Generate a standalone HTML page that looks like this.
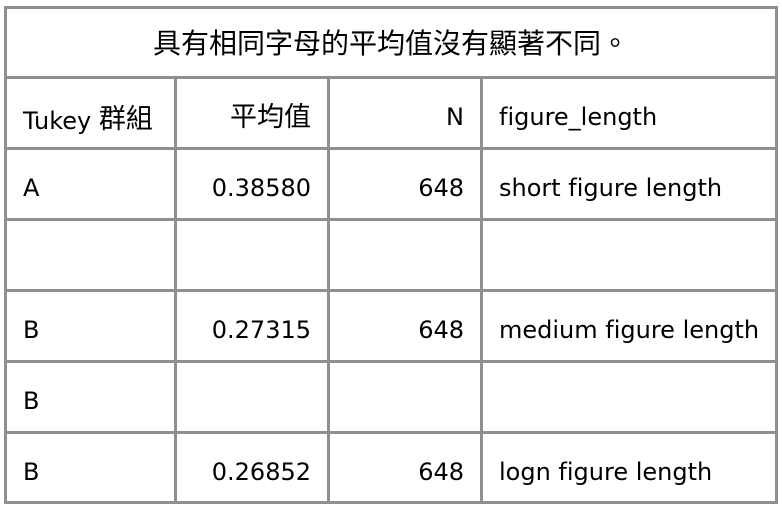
<!DOCTYPE html>
<html><head><meta charset="utf-8"><style>
body{margin:0;background:#fff;width:782px;height:510px;position:relative;overflow:hidden;font-family:"DejaVu Sans","Noto Sans CJK TC",sans-serif;font-size:24px;color:#000;font-variant-ligatures:none}
.h{position:absolute;left:4px;width:774px;height:3px;background:#8f8f8f}
.v{position:absolute;width:3px;background:#8f8f8f}
.t{position:absolute;height:70px;line-height:76px;white-space:nowrap}
.r{text-align:right}
.c{font-family:"Noto Sans CJK TC",sans-serif;font-size:27px}
</style></head><body>
<div class="h" style="top:6px"></div>
<div class="h" style="top:76px"></div>
<div class="h" style="top:147px"></div>
<div class="h" style="top:218px"></div>
<div class="h" style="top:289px"></div>
<div class="h" style="top:360px"></div>
<div class="h" style="top:431px"></div>
<div class="h" style="top:501px"></div>
<div class="v" style="left:4px;top:6px;height:498px"></div>
<div class="v" style="left:775px;top:6px;height:498px"></div>
<div class="v" style="left:174px;top:76px;height:428px"></div>
<div class="v" style="left:327px;top:76px;height:428px"></div>
<div class="v" style="left:480px;top:76px;height:428px"></div>

<div class="t c" style="left:7px;width:768px;top:6px;text-align:center;line-height:72px;font-size:28px">具有相同字母的平均值沒有顯著不同。</div>

<div class="t" style="left:23px;top:79px">Tukey <span class="c" style="vertical-align:1px">群組</span></div>
<div class="t r c" style="left:177px;width:134px;top:79px;line-height:72px">平均值</div>
<div class="t r" style="left:330px;width:134px;top:79px">N</div>
<div class="t" style="left:499px;top:79px">figure_length</div>

<div class="t" style="left:23px;top:150px">A</div>
<div class="t r" style="left:177px;width:134px;top:150px">0.38580</div>
<div class="t r" style="left:330px;width:134px;top:150px">648</div>
<div class="t" style="left:499px;top:150px">short figure length</div>

<div class="t" style="left:23px;top:292px">B</div>
<div class="t r" style="left:177px;width:134px;top:292px">0.27315</div>
<div class="t r" style="left:330px;width:134px;top:292px">648</div>
<div class="t" style="left:499px;top:292px">medium figure length</div>

<div class="t" style="left:23px;top:363px">B</div>

<div class="t" style="left:23px;top:434px">B</div>
<div class="t r" style="left:177px;width:134px;top:434px">0.26852</div>
<div class="t r" style="left:330px;width:134px;top:434px">648</div>
<div class="t" style="left:499px;top:434px">logn figure length</div>
</body></html>
